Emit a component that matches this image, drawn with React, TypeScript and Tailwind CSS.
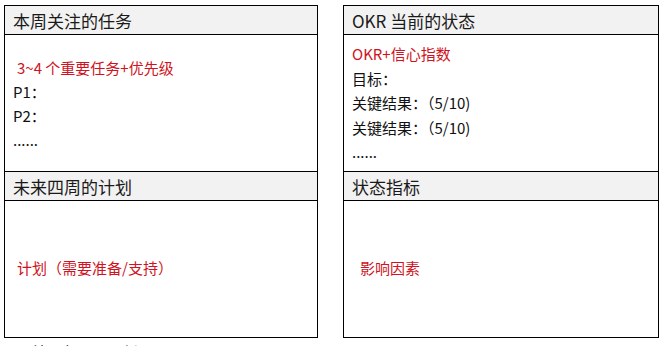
const FONT = { fontFamily: '"Noto Sans CJK SC", "Liberation Sans", sans-serif' };

function HeaderBox({ title }: { title: string }) {
  return (
    <div className="flex h-[29px] items-center border-b border-black bg-[#f2f2f2] pl-2 text-[17px] leading-none text-[#1a1a1a]">
      {title}
    </div>
  );
}

export default function App() {
  return (
    <div className="h-[346px] w-[665px] overflow-hidden bg-white pt-[5px] pl-[4px]" style={FONT}>
      <div className="flex gap-[25px]">
        {/* Left column */}
        <div className="flex w-[314px] flex-col">
          <div className="flex h-[167px] flex-col border border-black">
            <HeaderBox title="本周关注的任务" />
            <div className="pt-[21px] pl-2 text-[15px] leading-[24px] text-[#111]">
              <p className="pl-1 text-[#cf1322]">3~4 个重要任务+优先级</p>
              <p>P1：</p>
              <p>P2：</p>
              <p>......</p>
            </div>
          </div>
          <div className="flex h-[166px] flex-col border-x border-b border-black">
            <HeaderBox title="未来四周的计划" />
            <div className="flex flex-1 items-center pl-3 pb-[1px] text-[15px] text-[#cf1322]">
              计划（需要准备/支持）
            </div>
          </div>
          <p className="pl-[29px] pt-[4px] text-[15px] leading-[20px] text-[#111]">注：每周一更新</p>
        </div>

        {/* Right column */}
        <div className="flex w-[316px] flex-col">
          <div className="flex h-[167px] flex-col border border-black">
            <HeaderBox title="OKR 当前的状态" />
            <div className="pt-[7px] pl-2 text-[15px] leading-[24.5px] text-[#111]">
              <p className="text-[#cf1322]">OKR+信心指数</p>
              <p>目标：</p>
              <p>关键结果：（5/10)</p>
              <p>关键结果：（5/10)</p>
              <p>......</p>
            </div>
          </div>
          <div className="flex h-[166px] flex-col border-x border-b border-black">
            <HeaderBox title="状态指标" />
            <div className="flex flex-1 items-center pl-4 pb-[1px] text-[15px] text-[#cf1322]">
              影响因素
            </div>
          </div>
        </div>
      </div>
    </div>
  );
}
